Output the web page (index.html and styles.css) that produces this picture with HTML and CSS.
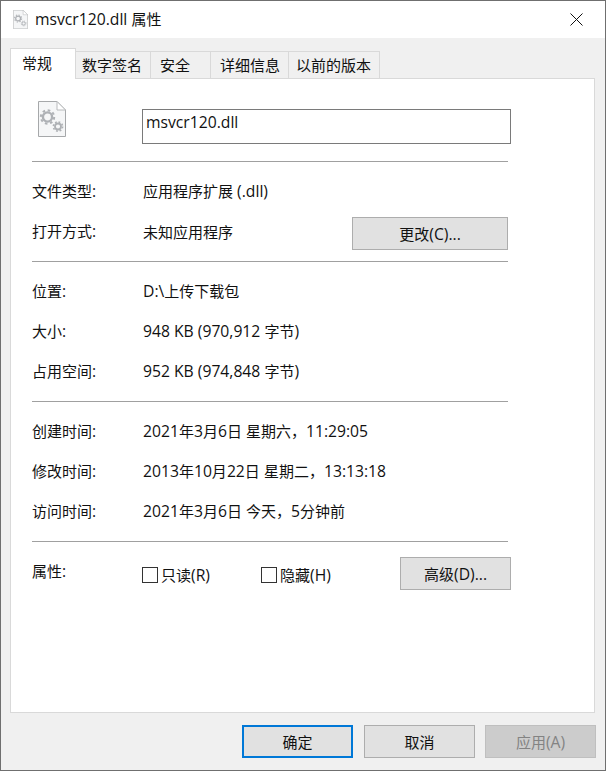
FILE: index.html
```html
<!DOCTYPE html>
<html lang="zh-CN">
<head>
<meta charset="utf-8">
<title>msvcr120.dll 属性</title>
<link rel="stylesheet" href="styles.css">
</head>
<body>
<svg class="defs" width="0" height="0" aria-hidden="true">
  <defs>
    <symbol id="file" viewBox="0 0 28 36">
      <path d="M.5.5H19L27.5 9V35.5H.5Z" fill="#f5f6f7" stroke="#a6a8aa"/>
      <path d="M19 .5V9H27.5Z" fill="#fff" stroke="#b8babc"/>
      <circle cx="9.5" cy="16" r="4.6" fill="none" stroke="#aeb1b5" stroke-width="2.4"/>
      <circle cx="9.5" cy="16" r="6.7" fill="none" stroke="#aeb1b5" stroke-width="2" stroke-dasharray="2.6 2.66"/>
      <circle cx="20" cy="25.5" r="3" fill="none" stroke="#aeb1b5" stroke-width="1.8"/>
      <circle cx="20" cy="25.5" r="4.6" fill="none" stroke="#aeb1b5" stroke-width="1.6" stroke-dasharray="1.8 1.81"/>
    </symbol>
  </defs>
</svg>
<div class="window">
  <header class="titlebar">
    <svg class="title-icon"><use href="#file"/></svg>
    <span class="title-text"><span class="n">msvcr120.dll </span>属性</span>
    <svg class="close" viewBox="0 0 13 13"><path d="M.5.5 12.5 12.5M12.5.5.5 12.5" stroke="#111" fill="none"/></svg>
  </header>
  <main class="body">
    <nav class="tabs">
      <div class="tab active t1">常规</div>
      <div class="tab t2">数字签名</div>
      <div class="tab t3">安全</div>
      <div class="tab t4">详细信息</div>
      <div class="tab t5">以前的版本</div>
    </nav>
    <section class="panel">
      <div class="head-row">
        <svg class="file-icon"><use href="#file"/></svg>
        <div class="name-box n">msvcr120.dll</div>
      </div>
      <hr class="rule rule-first">
      <div class="row"><span class="label">文件类型<span class="n">:</span></span><span>应用程序扩展<span class="n"> (.dll)</span></span></div>
      <div class="row">
        <span class="label">打开方式<span class="n">:</span></span><span class="value-grow">未知应用程序</span>
        <button class="btn btn-change">更改<span class="n">(C)...</span></button>
      </div>
      <hr class="rule">
      <div class="row"><span class="label">位置<span class="n">:</span></span><span><span class="n">D:\</span>上传下载包</span></div>
      <div class="row"><span class="label">大小<span class="n">:</span></span><span><span class="n">948 KB (970,912 </span>字节<span class="n">)</span></span></div>
      <div class="row"><span class="label">占用空间<span class="n">:</span></span><span><span class="n">952 KB (974,848 </span>字节<span class="n">)</span></span></div>
      <hr class="rule">
      <div class="row"><span class="label">创建时间<span class="n">:</span></span><span><span class="n">2021</span>年<span class="n">3</span>月<span class="n">6</span>日<span class="n"> </span>星期六，<span class="n">11:29:05</span></span></div>
      <div class="row"><span class="label">修改时间<span class="n">:</span></span><span><span class="n">2013</span>年<span class="n">10</span>月<span class="n">22</span>日<span class="n"> </span>星期二，<span class="n">13:13:18</span></span></div>
      <div class="row"><span class="label">访问时间<span class="n">:</span></span><span><span class="n">2021</span>年<span class="n">3</span>月<span class="n">6</span>日<span class="n"> </span>今天，<span class="n">5</span>分钟前</span></div>
      <hr class="rule">
      <div class="row row-attrs">
        <span class="label">属性<span class="n">:</span></span>
        <span class="check check-r"><i class="box"></i>只读<span class="n">(R)</span></span>
        <span class="check check-h"><i class="box"></i>隐藏<span class="n">(H)</span></span>
        <button class="btn btn-adv">高级<span class="n">(D)...</span></button>
      </div>
    </section>
    <footer class="footer">
      <button class="btn btn-foot btn-default">确定</button>
      <button class="btn btn-foot">取消</button>
      <button class="btn btn-foot btn-disabled">应用<span class="n">(A)</span></button>
    </footer>
  </main>
</div>
</body>
</html>
```
FILE: styles.css
```css
* { box-sizing: border-box; }
html, body { margin: 0; padding: 0; background: #f0f0f0; }
body { font-family: "Open Sans", "Noto Sans CJK SC", sans-serif; font-size: 15px; color: #111; }
.n { font-size: 15.7px; }
.defs { display: block; height: 0; }
.window { width: 606px; height: 771px; border: 1px solid #6f6f6f; display: flex; flex-direction: column; background: #f0f0f0; }
.titlebar { height: 37px; flex: none; background: #fff; display: flex; align-items: center; padding: 0 22px 0 12px; }
.title-icon { width: 15px; height: 19px; flex: none; }
.title-text { margin: -2px 0 0 7px; flex: 1; }
.close { width: 13px; height: 13px; flex: none; }
.body { flex: 1; display: flex; flex-direction: column; padding: 10px 9px 12px 9px; }
.tabs { display: flex; align-items: flex-end; height: 31px; flex: none; position: relative; z-index: 1; }
.tab { height: 28px; background: #f0f0f0; border: 1px solid #d9d9d9; border-left: 0; line-height: 27px; white-space: nowrap; }
.tab.active { height: 31px; background: #fff; border-left: 1px solid #d9d9d9; border-bottom: 0; line-height: 28px; }
.t1 { width: 66px; padding-left: 11px; }
.t2 { width: 75px; padding-left: 6px; }
.t3 { width: 60px; padding-left: 9px; }
.t4 { width: 78px; padding-left: 9px; }
.t5 { width: 91px; padding-left: 7px; }
.panel { width: 585px; height: 635px; flex: none; margin-top: -1px; background: #fff; border: 1px solid #d9d9d9; padding: 30px 85px 0 21px; }
.head-row { height: 36px; display: flex; align-items: flex-start; }
.file-icon { width: 28px; height: 36px; margin: -8px 0 0 6px; flex: none; }
.name-box { width: 369px; height: 35px; margin-left: 76px; margin-right: -3px; border: 1px solid #7a7a7a; padding: 0 3px; line-height: 25px; flex: none; }
.rule { height: 1px; border: 0; margin: 10px 0 9px; background: #a0a0a0; width: 476px; }
.rule-first { margin-top: 16px; }
.row { height: 40px; display: flex; align-items: center; white-space: nowrap; }
.label { width: 111px; flex: none; }
.row-attrs .label { width: 110px; padding-top: 9px; }
.value-grow { width: 209px; flex: none; }
.btn { font: inherit; color: #111; background: #e1e1e1; border: 1px solid #adadad; padding: 0; }
.btn-change { width: 156px; height: 33px; margin-top: 5px; flex: none; }
.row-attrs { height: 49px; align-items: flex-start; }
.check { display: flex; align-items: center; margin-top: 14px; height: 19px; flex: none; }
.check-r { width: 119px; }
.check-h { width: 139px; }
.box { width: 16px; height: 16px; border: 1px solid #333; background: #fff; margin-right: 3px; flex: none; }
.btn-adv { width: 111px; height: 33px; margin-top: 6px; flex: none; }
.footer { display: flex; margin-top: 12px; padding-left: 232px; gap: 11px; }
.btn-foot { width: 111px; height: 33px; flex: none; }
.btn-default { border: 2px solid #0078d7; }
.btn-disabled { background: #cccccc; border-color: #bfbfbf; color: #838383; margin-left: -1px; }
```
